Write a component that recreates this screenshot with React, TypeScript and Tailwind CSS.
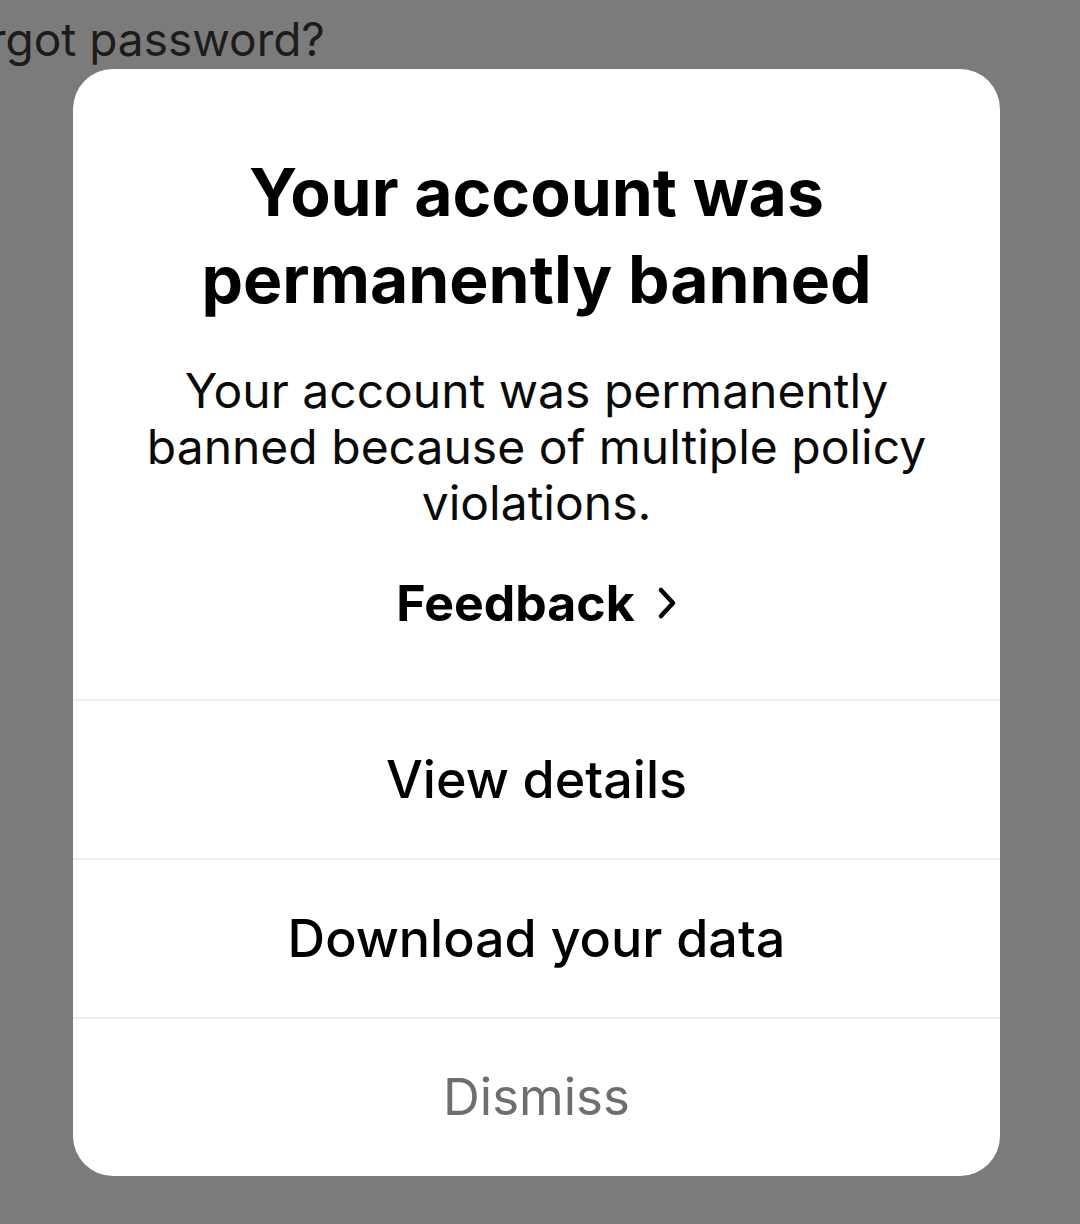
import React from 'react';

const font = { fontFamily: 'Inter, "Noto Sans", sans-serif' };

const ActionRow = ({ label, muted }: { label: string; muted?: boolean }) => {
    return (
        <div className="h-[159px] border-t-2 border-[#efefef] flex items-center justify-center">
            <span className={muted ? "text-[51px] font-normal text-[#6e6e6e]" : "text-[52px] font-medium text-black"}>
                {label}
            </span>
        </div>
    );
}

export default function App() {
    return (
        <div className="w-[1080px] h-[1224px] bg-[#7b7b7b] overflow-hidden" style={font}>
            <div className="h-[69px] pt-[13px] -ml-[64px] text-[46px] leading-[52px] text-[#1c1c1c] whitespace-nowrap">
                Forgot password?
            </div>

            <div className="ml-[73px] w-[927px] h-[1107px] bg-white rounded-[40px] overflow-hidden flex flex-col">
                <div className="pt-[80px] px-[40px] flex flex-col items-center text-center">
                    <h1 className="text-[66px] leading-[87px] font-bold text-black">
                        Your account was<br />permanently banned
                    </h1>
                    <p className="mt-[40px] text-[48px] leading-[56px] text-[#0a0a0a] max-w-[820px]">
                        Your account was permanently banned because of multiple policy violations.
                    </p>
                    <div className="mt-[42px] h-[60px] flex items-center gap-[22px] text-[50px] font-bold text-black">
                        Feedback
                        <svg width="20" height="34" viewBox="0 0 20 34" fill="none">
                            <path d="M4 4 L16 17 L4 30" stroke="black" strokeWidth="4.5" strokeLinecap="round" strokeLinejoin="round" />
                        </svg>
                    </div>
                </div>
                <div className="mt-auto">
                    <ActionRow label="View details" />
                    <ActionRow label="Download your data" />
                    <ActionRow label="Dismiss" muted />
                </div>
            </div>
        </div>
    );
}
